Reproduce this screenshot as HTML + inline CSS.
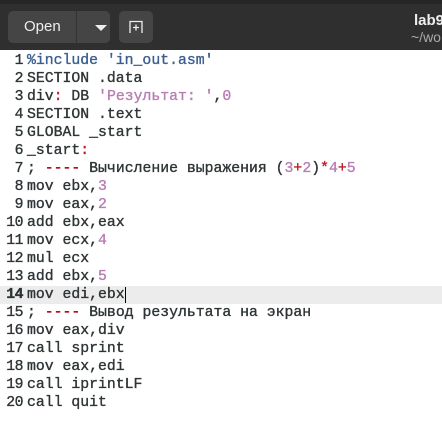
<!DOCTYPE html>
<html><head><meta charset="utf-8"><style>
body{margin:0;width:442px;height:437px;overflow:hidden;background:#fff;font-family:"Liberation Mono",monospace;}
.hdr{position:absolute;left:0;top:0;width:442px;height:50px;background:#2f2f2f;}
.strip{position:absolute;left:0;top:0;width:442px;height:4px;background:#262626;}
.btn{position:absolute;top:11px;height:32px;background:#454545;border-radius:5px;color:#eee;font:15px "Liberation Sans",sans-serif;}
.title{position:absolute;left:414px;top:12px;color:#eee;font:bold 15px "Liberation Sans",sans-serif;}
.sub{position:absolute;left:411px;top:29px;color:#aaa;font:14px "Liberation Sans",sans-serif;}
.ed{position:absolute;left:0;top:52px;width:442px;}
.l{height:18px;line-height:18px;font-size:14.8px;white-space:pre;position:relative;color:#2e3436;-webkit-text-stroke:0.35px currentColor;}
.n{display:inline-block;width:23px;text-align:right;color:#2e3436;margin-right:4px;letter-spacing:-0.5px;}
.cur{background:#ececec;}
.cur .n{font-weight:bold;}
.c{color:#a40000}.s{color:#b77fb3}.d{color:#b77fb3}.p{color:#3b5e91}.r{color:#c01c28}
</style></head><body>
<div class="hdr"><div class="strip"></div>
<div class="btn" style="left:8px;width:102px;"><span style="position:absolute;left:16px;top:7px">Open</span><div style="position:absolute;left:68px;top:0;width:1px;height:32px;background:#333"></div><div style="position:absolute;left:87px;top:14px;width:0;height:0;border-left:6px solid transparent;border-right:6px solid transparent;border-top:6px solid #eee"></div></div>
<div class="btn" style="left:119px;width:34px;"><svg width="34" height="32" style="position:absolute;left:0;top:0"><path d="M11 22V10.5h12V22" fill="none" stroke="#eee" stroke-width="1.3"/><path d="M17 13.5v6M14 16.5h6" stroke="#eee" stroke-width="1.3"/></svg></div>
<div class="title">lab9</div><div class="sub">~/wo</div>
</div>
<div class="ed">
<div class="l"><span class="n">1</span><span class="p">%include 'in_out.asm'</span></div>
<div class="l"><span class="n">2</span>SECTION .data</div>
<div class="l"><span class="n">3</span>div<span class="r">:</span> DB <span class="s">'Результат: '</span>,<span class="d">0</span></div>
<div class="l"><span class="n">4</span>SECTION .text</div>
<div class="l"><span class="n">5</span>GLOBAL _start</div>
<div class="l"><span class="n">6</span>_start<span class="r">:</span></div>
<div class="l"><span class="n">7</span>; <span class="c">----</span> Вычисление выражения (<span class="d">3</span><span class="r">+</span><span class="d">2</span>)<span class="r">*</span><span class="d">4</span><span class="r">+</span><span class="d">5</span></div>
<div class="l"><span class="n">8</span>mov ebx,<span class="d">3</span></div>
<div class="l"><span class="n">9</span>mov eax,<span class="d">2</span></div>
<div class="l"><span class="n">10</span>add ebx,eax</div>
<div class="l"><span class="n">11</span>mov ecx,<span class="d">4</span></div>
<div class="l"><span class="n">12</span>mul ecx</div>
<div class="l"><span class="n">13</span>add ebx,<span class="d">5</span></div>
<div class="l cur"><span class="n">14</span>mov edi,ebx<span style="border-left:1px solid #000"></span></div>
<div class="l"><span class="n">15</span>; <span class="c">----</span> Вывод результата на экран</div>
<div class="l"><span class="n">16</span>mov eax,div</div>
<div class="l"><span class="n">17</span>call sprint</div>
<div class="l"><span class="n">18</span>mov eax,edi</div>
<div class="l"><span class="n">19</span>call iprintLF</div>
<div class="l"><span class="n">20</span>call quit</div>
</div>
</body></html>
